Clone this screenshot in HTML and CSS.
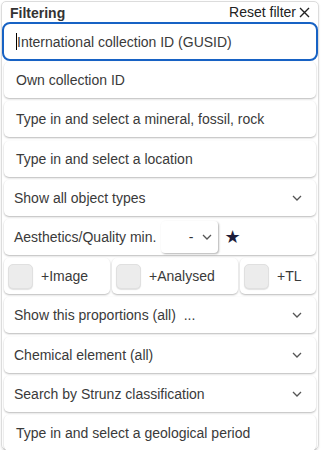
FILE: index.html
```html
<!DOCTYPE html>
<html>
<head>
<meta charset="utf-8">
<link rel="stylesheet" href="styles.css">
</head>
<body>
<div class="panel">
  <div class="head">
    <span class="title">Filtering</span>
    <span class="reset">Reset filter <svg class="x" width="11" height="11" viewBox="0 0 11 11"><path d="M1 1L10 10M10 1L1 10" stroke="#222" stroke-width="1.4" fill="none"/></svg></span>
  </div>
  <div class="rows">
    <div class="row input focus"><span class="caret"></span>International collection ID (GUSID)</div>
    <div class="row input">Own collection ID</div>
    <div class="row input">Type in and select a mineral, fossil, rock</div>
    <div class="row input">Type in and select a location</div>
    <div class="row select"><span>Show all object types</span><svg class="chev" width="10" height="6" viewBox="0 0 10 6"><path d="M1 1L5 5L9 1" stroke="#555" stroke-width="1.3" fill="none"/></svg></div>
    <div class="row quality">
      <span>Aesthetics/Quality min.</span>
      <div class="mini"><span class="dash">-</span><svg class="chev" width="10" height="6" viewBox="0 0 10 6"><path d="M1 1L5 5L9 1" stroke="#555" stroke-width="1.3" fill="none"/></svg></div>
      <span class="star">★</span>
    </div>
    <div class="checks">
      <div class="chk c1"><span class="box"></span>+Image</div>
      <div class="chk c2"><span class="box"></span>+Analysed</div>
      <div class="chk c3"><span class="box"></span>+TL</div>
    </div>
    <div class="row select"><span>Show this proportions (all)  ...</span><svg class="chev" width="10" height="6" viewBox="0 0 10 6"><path d="M1 1L5 5L9 1" stroke="#555" stroke-width="1.3" fill="none"/></svg></div>
    <div class="row select"><span>Chemical element (all)</span><svg class="chev" width="10" height="6" viewBox="0 0 10 6"><path d="M1 1L5 5L9 1" stroke="#555" stroke-width="1.3" fill="none"/></svg></div>
    <div class="row select"><span>Search by Strunz classification</span><svg class="chev" width="10" height="6" viewBox="0 0 10 6"><path d="M1 1L5 5L9 1" stroke="#555" stroke-width="1.3" fill="none"/></svg></div>
    <div class="row input">Type in and select a geological period</div>
  </div>
</div>
</body>
</html>
```
FILE: styles.css
```css
html, body {
  margin: 0;
  padding: 0;
  background: #fff;
}
body {
  font-family: "Liberation Sans", Arial, sans-serif;
  font-size: 14px;
  color: #3a3a3a;
}
.panel {
  margin: 1px 5px 0 1px;
  border: 1px solid #dcdcdc;
  border-radius: 5px;
  padding: 0 2px 2px 2px;
  box-shadow: 0 1px 2px rgba(0,0,0,0.12);
  height: 449px;
  box-sizing: border-box;
}
.head {
  height: 21px;
  display: flex;
  align-items: flex-end;
  justify-content: space-between;
  padding: 0 6px 0 6px;
  line-height: 16px;
}
.title {
  font-weight: bold;
  color: #333;
  padding-bottom: 2px;
}
.reset {
  color: #222;
  display: flex;
  align-items: center;
  gap: 3px;
  padding-bottom: 3px;
}
.rows {
  display: flex;
  flex-direction: column;
  gap: 3.2px;
}
.row {
  height: 36px;
  box-sizing: border-box;
  background: #fff;
  border-radius: 5px;
  box-shadow: 0 1px 2px rgba(0,0,0,0.28);
  display: flex;
  align-items: center;
  white-space: pre;
}
.input {
  padding-left: 12px;
}
.select {
  padding: 0 14px 0 10px;
  justify-content: space-between;
}
.focus {
  outline: 2px solid #1762c4;
  border-radius: 6px;
  box-shadow: none;
  height: 35px;
  margin-top: 1px;
}
.caret {
  display: inline-block;
  width: 1px;
  height: 17px;
  background: #000;
}
.quality {
  padding-left: 10px;
}
.mini {
  margin-left: 5px;
  width: 57px;
  height: 32px;
  box-sizing: border-box;
  border-radius: 4px;
  box-shadow: 1px 1px 2px rgba(0,0,0,0.3);
  display: flex;
  align-items: center;
  justify-content: flex-end;
  padding-right: 6px;
  gap: 9px;
}
.dash {
  color: #333;
}
.star {
  margin-left: 6px;
  font-size: 18px;
  color: #1d1d3a;
  font-family: "DejaVu Sans", sans-serif;
}
.checks {
  display: flex;
  gap: 2px;
  height: 36px;
}
.chk {
  box-sizing: border-box;
  background: #fff;
  border-radius: 5px;
  box-shadow: 0 1px 2px rgba(0,0,0,0.28);
  display: flex;
  align-items: center;
  padding-left: 4px;
  gap: 8px;
}
.c1 { width: 106px; }
.c2 { width: 126px; }
.c3 { flex: 1; }
.box {
  width: 25px;
  height: 25px;
  box-sizing: border-box;
  background: #ececec;
  border: 1px solid #e0e0e0;
  border-radius: 5px;
  box-shadow: 0 1px 1px rgba(0,0,0,0.12);
}
```
